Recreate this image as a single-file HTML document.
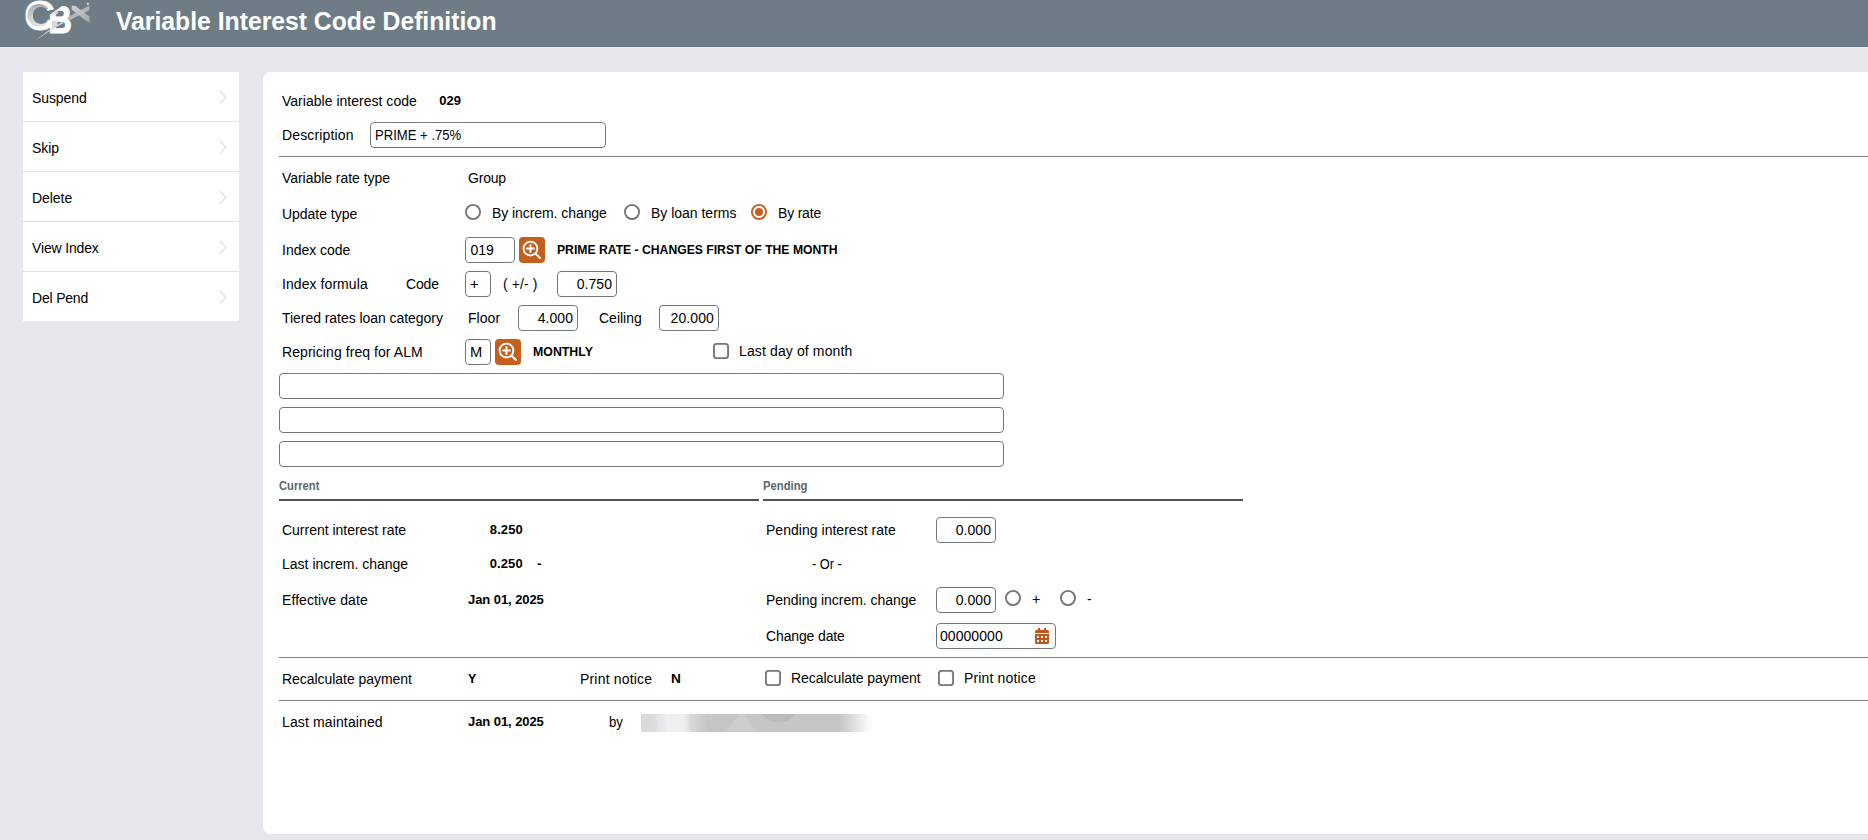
<!DOCTYPE html>
<html lang="en">
<head>
<meta charset="utf-8">
<title>Variable Interest Code Definition</title>
<style>
*{box-sizing:border-box;margin:0;padding:0}
html,body{width:1868px;height:840px;overflow:hidden}
body{background:#e7e6ed;font-family:"Liberation Sans",sans-serif;font-size:14px;color:#000;position:relative}
.abs,.t,.in,.hr,.rad,.chk,.btn{position:absolute}
.t{white-space:pre;transform-origin:0 0;line-height:normal}
#hdr{left:0;top:0;width:1868px;height:47px;background:#6e7d85;border-bottom:1px solid #65757d}
#hdr2{left:0;top:47px;width:1868px;height:1px;background:#edecf2}
#side{left:23px;top:72px;width:216px;height:249px;background:#fff}
.sep{position:absolute;left:0;width:216px;height:1px;background:#e4e3ec}
.chev{position:absolute;left:196px;width:8px;height:14px}
#panel{left:263px;top:72px;width:1620px;height:762px;background:#fff;border-radius:8px 0 0 8px}
.in{height:26px;border:1px solid #74777a;border-radius:4px;background:#fff}
.hr{height:1px;background:#7d7d7d;left:279px;width:1589px}
.ul{position:absolute;height:2px;background:#4c585e;top:499px}
.rad{width:16px;height:16px;border:2px solid #6b6b6b;border-radius:50%;background:#fff}
.rad.on{border-color:#c4601e}
.rad.on::after{content:"";position:absolute;left:2px;top:2px;width:8px;height:8px;border-radius:50%;background:#c4601e}
.chk{width:16px;height:16px;border:2px solid #737373;border-radius:3px;background:#fff}
.btn{width:26px;height:26px;border-radius:4px;background:#c4601e}
.btn svg{position:absolute;left:0;top:0}
</style>
</head>
<body>
<div id="hdr" class="abs"></div><div id="hdr2" class="abs"></div>
<!--LOGO_START--><svg class="abs" style="left:20px;top:0" width="75" height="46" viewBox="20 0 75 46">
  <defs>
    <linearGradient id="cg" x1="0" y1="3" x2="0" y2="28" gradientUnits="userSpaceOnUse"><stop offset="0" stop-color="#a7a9aa"/><stop offset="0.5" stop-color="#c9caca"/><stop offset="1" stop-color="#e6e6e6"/></linearGradient>
    <linearGradient id="xg" x1="72" y1="6" x2="90" y2="22" gradientUnits="userSpaceOnUse"><stop offset="0" stop-color="#d0d1d1"/><stop offset="1" stop-color="#a4a8aa"/></linearGradient>
    <linearGradient id="sg" x1="35" y1="40" x2="89" y2="6" gradientUnits="userSpaceOnUse"><stop offset="0" stop-color="#c9cdcf"/><stop offset="0.45" stop-color="#e4e4e4"/><stop offset="0.6" stop-color="#c2c4c5"/><stop offset="1" stop-color="#a3a7a9"/></linearGradient>
    <linearGradient id="bg2" x1="51" y1="14" x2="60" y2="9" gradientUnits="userSpaceOnUse"><stop offset="0" stop-color="#f4f4f4"/><stop offset="1" stop-color="#b9bbbc"/></linearGradient>
    <clipPath id="bclip"><path d="M46 40 V17.2 L66.5 3 H76 V40 Z"/></clipPath>
    <clipPath id="gclip"><path d="M20 -2 H45 L49 4 V9 H44 V21 H48 V32 H20 Z"/></clipPath>
  </defs>
  <text x="24.3" y="30.1" font-family="'Liberation Sans',sans-serif" font-weight="700" font-size="42.5" fill="#fff" stroke="#fff" stroke-width="0.8" transform="translate(24.3 0) scale(0.99 1) translate(-24.3 0)">C</text>
  <path d="M38.8 3.8 a11.5 11.5 0 1 0 0.01 0 Z M41.1 6.9 a8.5 8.5 0 1 1 -0.01 0 Z" fill="url(#cg)" fill-rule="evenodd" clip-path="url(#gclip)"/>
  <path d="M64.5 18.8 L89.3 5.6 L89.3 10.2 L69 20.6 Z" fill="#b4b7b9"/>
  <path d="M71.6 5.6 L75.6 5.9 L89.6 16.8 L89.6 22.4 L86.5 21 L71.6 9.6 Z" fill="url(#xg)"/>
  <circle cx="87.8" cy="3.9" r="1.1" fill="#d9dbdc"/>
  <g clip-path="url(#bclip)"><text x="48.2" y="33.4" font-family="'Liberation Sans',sans-serif" font-weight="700" font-size="39" fill="#fff" transform="translate(48.2 0) scale(0.84 1) translate(-48.2 0)" stroke="#fff" stroke-width="1.2">B</text></g>
  <path d="M50.5 18.3 L58.2 13 L58.2 9.6 L50.5 14.8 Z" fill="url(#bg2)"/>
  <path d="M52 20.5 H58 L57 25.6 L52 28.5 Z" fill="#dcdcdc"/>
  <path d="M35.2 40.7 L50 29.2 L62.5 21.6 L63.5 22.9 L50.8 30.2 Z" fill="#d5d8da"/>
</svg>
<!--LOGO_END-->
<div id="side" class="abs">
  <div class="sep" style="top:49px"></div><div class="sep" style="top:99px"></div><div class="sep" style="top:149px"></div><div class="sep" style="top:199px"></div>
</div>
<svg class="abs" style="left:219px;top:72px" width="10" height="250" viewBox="0 0 10 250" fill="none" stroke="#dcdce0" stroke-width="1.1">
  <path d="M1 19 L7 25.3 L1 31.6"/><path d="M1 69 L7 75.3 L1 81.6"/><path d="M1 119 L7 125.3 L1 131.6"/><path d="M1 169 L7 175.3 L1 181.6"/><path d="M1 219 L7 225.3 L1 231.6"/>
</svg>
<div id="panel" class="abs"></div>

<div class="in" style="left:370px;top:122px;width:236px"></div>
<div class="hr" style="top:156px"></div>

<svg class="abs" style="left:465px;top:204px" width="16" height="16" viewBox="0 0 16 16"><circle cx="8" cy="8" r="7.08" fill="#fff" stroke="#767676" stroke-width="1.85"/></svg>
<svg class="abs" style="left:624px;top:204px" width="16" height="16" viewBox="0 0 16 16"><circle cx="8" cy="8" r="7.08" fill="#fff" stroke="#767676" stroke-width="1.85"/></svg>
<svg class="abs" style="left:751px;top:204px" width="16" height="16" viewBox="0 0 16 16"><circle cx="8" cy="8" r="7.08" fill="#fff" stroke="#c4601e" stroke-width="1.85"/><circle cx="8" cy="8" r="4" fill="#c4601e"/></svg>

<div class="in" style="left:465px;top:237px;width:50px"></div>
<div class="btn" style="left:519px;top:237px"><svg width="26" height="26" viewBox="0 0 26 26" fill="none" stroke="#fff" stroke-width="2" stroke-linecap="round"><circle cx="11.45" cy="11.55" r="6.9" stroke-width="1.9"/><path d="M16.6 16.7 L21 21"/><path d="M7.2 11.55 H15.7 M11.45 7.3 V15.8" stroke-linecap="butt"/></svg></div>

<div class="in" style="left:465px;top:271px;width:26px"></div>
<div class="in" style="left:557px;top:271px;width:60px"></div>

<div class="in" style="left:518px;top:305px;width:60px"></div>
<div class="in" style="left:659px;top:305px;width:60px"></div>

<div class="in" style="left:465px;top:339px;width:26px"></div>
<div class="btn" style="left:495px;top:339px"><svg width="26" height="26" viewBox="0 0 26 26" fill="none" stroke="#fff" stroke-width="2" stroke-linecap="round"><circle cx="11.45" cy="11.55" r="6.9" stroke-width="1.9"/><path d="M16.6 16.7 L21 21"/><path d="M7.2 11.55 H15.7 M11.45 7.3 V15.8" stroke-linecap="butt"/></svg></div>
<svg class="abs" style="left:713px;top:343px" width="16" height="16" viewBox="0 0 16 16"><rect x="0.92" y="0.92" width="14.16" height="14.16" rx="2.6" fill="#fff" stroke="#767676" stroke-width="1.85"/></svg>

<div class="in" style="left:279px;top:373px;width:725px"></div>
<div class="in" style="left:279px;top:407px;width:725px"></div>
<div class="in" style="left:279px;top:441px;width:725px"></div>

<div class="ul" style="left:279px;width:480px"></div>
<div class="ul" style="left:763px;width:480px"></div>

<div class="in" style="left:936px;top:517px;width:60px"></div>
<div class="in" style="left:936px;top:587px;width:60px"></div>
<svg class="abs" style="left:1005px;top:590px" width="16" height="16" viewBox="0 0 16 16"><circle cx="8" cy="8" r="7.08" fill="#fff" stroke="#767676" stroke-width="1.85"/></svg>
<svg class="abs" style="left:1060px;top:590px" width="16" height="16" viewBox="0 0 16 16"><circle cx="8" cy="8" r="7.08" fill="#fff" stroke="#767676" stroke-width="1.85"/></svg>
<div class="in" style="left:936px;top:623px;width:120px"></div>
<svg class="abs" style="left:1035px;top:628px" width="14" height="16" viewBox="0 0 14 16" fill="#c0581a"><rect x="3" y="0" width="2" height="3"/><rect x="9.1" y="0" width="2" height="3"/><path d="M0 3.5 Q0 2 1.5 2 H12.5 Q14 2 14 3.5 V5 H0 Z"/><path d="M0 6.1 H14 V14.5 Q14 16 12.5 16 H1.5 Q0 16 0 14.5 Z M2.1 8 V10 H4 V8 Z M6 8 V10 H8 V8 Z M10 8 V10 H12 V8 Z M2.1 12 V14 H4 V12 Z M6 12 V14 H8 V12 Z M10 12 V14 H12 V12 Z" fill-rule="evenodd"/></svg>

<div class="hr" style="top:657px"></div>
<svg class="abs" style="left:765px;top:670px" width="16" height="16" viewBox="0 0 16 16"><rect x="0.92" y="0.92" width="14.16" height="14.16" rx="2.6" fill="#fff" stroke="#767676" stroke-width="1.85"/></svg>
<svg class="abs" style="left:938px;top:670px" width="16" height="16" viewBox="0 0 16 16"><rect x="0.92" y="0.92" width="14.16" height="14.16" rx="2.6" fill="#fff" stroke="#767676" stroke-width="1.85"/></svg>
<div class="hr" style="top:700px"></div>
<svg class="abs" style="left:641px;top:714px" width="231" height="18" viewBox="0 0 231 18">
<defs><linearGradient id="rg" x1="0" y1="0" x2="231" y2="0" gradientUnits="userSpaceOnUse">
<stop offset="0" stop-color="#dadada"/><stop offset="0.06" stop-color="#dcdcdc"/><stop offset="0.075" stop-color="#e6e5eb"/><stop offset="0.095" stop-color="#e8e7ec"/><stop offset="0.11" stop-color="#efefef"/><stop offset="0.185" stop-color="#efefef"/><stop offset="0.2" stop-color="#e7e6ec"/><stop offset="0.215" stop-color="#dadada"/><stop offset="0.25" stop-color="#d0d0d0"/><stop offset="0.29" stop-color="#c6c6c6"/><stop offset="0.86" stop-color="#c6c6c6"/><stop offset="0.885" stop-color="#d0d0d0"/><stop offset="0.915" stop-color="#dcdcdc"/><stop offset="0.935" stop-color="#e6e5eb"/><stop offset="0.96" stop-color="#f0f0f0"/><stop offset="0.98" stop-color="#f8f8f4"/><stop offset="1" stop-color="#fcfcf8"/></linearGradient></defs>
<rect width="231" height="18" fill="url(#rg)"/>
<path d="M84 18 L98 0 L102 0 L116 18 Z" fill="#cccccc"/>
<path d="M121 0 H154 Q148 8.5 137.5 8.5 Q127 8.5 121 0 Z" fill="#babcbb"/>
</svg>

<span class="t" style="left:116.00px;top:6px;font-size:26.4px;transform:scaleX(0.9367);font-weight:700;color:#fff;">Variable Interest Code Definition</span>
<span class="t" style="left:32.00px;top:90px;font-size:14px;letter-spacing:-0.091px;">Suspend</span>
<span class="t" style="left:32.00px;top:140px;font-size:14px;letter-spacing:-0.104px;">Skip</span>
<span class="t" style="left:32.00px;top:190px;font-size:14px;letter-spacing:-0.060px;">Delete</span>
<span class="t" style="left:32.00px;top:240px;font-size:14px;letter-spacing:-0.158px;">View Index</span>
<span class="t" style="left:32.00px;top:290px;font-size:14px;letter-spacing:-0.192px;">Del Pend</span>
<span class="t" style="left:282.00px;top:93px;font-size:14px;letter-spacing:0.019px;">Variable interest code</span>
<span class="t" style="left:439.20px;top:93px;font-size:13px;letter-spacing:0.080px;font-weight:700;">029</span>
<span class="t" style="left:282.00px;top:127px;font-size:14px;letter-spacing:0.153px;">Description</span>
<span class="t" style="left:375.00px;top:127px;font-size:14px;transform:scaleX(0.9353);">PRIME + .75%</span>
<span class="t" style="left:282.00px;top:170px;font-size:14px;letter-spacing:-0.042px;">Variable rate type</span>
<span class="t" style="left:468.00px;top:170px;font-size:14px;letter-spacing:-0.207px;">Group</span>
<span class="t" style="left:282.00px;top:206px;font-size:14px;letter-spacing:-0.030px;">Update type</span>
<span class="t" style="left:492.00px;top:205px;font-size:14px;letter-spacing:-0.068px;">By increm. change</span>
<span class="t" style="left:651.00px;top:205px;font-size:14px;letter-spacing:-0.012px;">By loan terms</span>
<span class="t" style="left:778.00px;top:205px;font-size:14px;letter-spacing:-0.198px;">By rate</span>
<span class="t" style="left:282.00px;top:242px;font-size:14px;letter-spacing:-0.010px;">Index code</span>
<span class="t" style="left:470.40px;top:242px;font-size:14px;letter-spacing:0.080px;">019</span>
<span class="t" style="left:557.00px;top:242px;font-size:13px;transform:scaleX(0.9367);font-weight:700;">PRIME RATE - CHANGES FIRST OF THE MONTH</span>
<span class="t" style="left:282.00px;top:276px;font-size:14px;letter-spacing:0.072px;">Index formula</span>
<span class="t" style="left:406.00px;top:276px;font-size:14px;letter-spacing:-0.145px;">Code</span>
<span class="t" style="left:470.00px;top:276px;font-size:14px;transform:scaleX(1.0500);">+</span>
<span class="t" style="left:503.00px;top:276px;font-size:14px;letter-spacing:0.099px;">( +/- )</span>
<span class="t" style="left:576.67px;top:276px;font-size:14px;letter-spacing:0.080px;">0.750</span>
<span class="t" style="left:282.00px;top:310px;font-size:14px;letter-spacing:-0.047px;">Tiered rates loan category</span>
<span class="t" style="left:468.00px;top:310px;font-size:14px;letter-spacing:0.044px;">Floor</span>
<span class="t" style="left:537.68px;top:310px;font-size:14px;letter-spacing:0.080px;">4.000</span>
<span class="t" style="left:599.00px;top:310px;font-size:14px;letter-spacing:0.000px;">Ceiling</span>
<span class="t" style="left:670.61px;top:310px;font-size:14px;letter-spacing:0.080px;">20.000</span>
<span class="t" style="left:282.00px;top:344px;font-size:14px;letter-spacing:0.067px;">Repricing freq for ALM</span>
<span class="t" style="left:470.00px;top:344px;font-size:14px;transform:scaleX(1.0500);">M</span>
<span class="t" style="left:533.00px;top:344px;font-size:13px;transform:scaleX(0.9500);font-weight:700;">MONTHLY</span>
<span class="t" style="left:739.00px;top:343px;font-size:14px;letter-spacing:0.123px;">Last day of month</span>
<span class="t" style="left:279.00px;top:479px;font-size:12px;transform:scaleX(0.9320);font-weight:700;color:#5c676c;">Current</span>
<span class="t" style="left:763.00px;top:479px;font-size:12px;transform:scaleX(0.9379);font-weight:700;color:#5c676c;">Pending</span>
<span class="t" style="left:282.00px;top:522px;font-size:14px;letter-spacing:-0.018px;">Current interest rate</span>
<span class="t" style="left:489.83px;top:522px;font-size:13px;letter-spacing:0.080px;font-weight:700;">8.250</span>
<span class="t" style="left:766.00px;top:522px;font-size:14px;letter-spacing:0.028px;">Pending interest rate</span>
<span class="t" style="left:955.67px;top:522px;font-size:14px;letter-spacing:0.080px;">0.000</span>
<span class="t" style="left:282.00px;top:556px;font-size:14px;letter-spacing:0.005px;">Last increm. change</span>
<span class="t" style="left:489.78px;top:556px;font-size:13px;letter-spacing:0.080px;font-weight:700;">0.250</span>
<span class="t" style="left:537.00px;top:556px;font-size:13px;transform:scaleX(1.0500);font-weight:700;">-</span>
<span class="t" style="left:812.00px;top:556px;font-size:14px;transform:scaleX(0.9137);">- Or -</span>
<span class="t" style="left:282.00px;top:592px;font-size:14px;letter-spacing:0.084px;">Effective date</span>
<span class="t" style="left:468.00px;top:592px;font-size:13px;letter-spacing:-0.070px;font-weight:700;">Jan 01, 2025</span>
<span class="t" style="left:766.00px;top:592px;font-size:14px;letter-spacing:-0.030px;">Pending increm. change</span>
<span class="t" style="left:955.67px;top:592px;font-size:14px;letter-spacing:0.080px;">0.000</span>
<span class="t" style="left:1032.00px;top:591px;font-size:14px;transform:scaleX(1.0127);">+</span>
<span class="t" style="left:1087.00px;top:591px;font-size:14px;transform:scaleX(0.9919);">-</span>
<span class="t" style="left:766.00px;top:628px;font-size:14px;letter-spacing:-0.135px;">Change date</span>
<span class="t" style="left:939.92px;top:628px;font-size:14px;letter-spacing:0.080px;">00000000</span>
<span class="t" style="left:282.00px;top:671px;font-size:14px;letter-spacing:-0.044px;">Recalculate payment</span>
<span class="t" style="left:468.00px;top:671px;font-size:13px;transform:scaleX(0.9587);font-weight:700;">Y</span>
<span class="t" style="left:580.00px;top:671px;font-size:14px;letter-spacing:0.184px;">Print notice</span>
<span class="t" style="left:671.00px;top:671px;font-size:13px;transform:scaleX(1.0500);font-weight:700;">N</span>
<span class="t" style="left:791.00px;top:670px;font-size:14px;letter-spacing:-0.061px;">Recalculate payment</span>
<span class="t" style="left:964.00px;top:670px;font-size:14px;letter-spacing:0.148px;">Print notice</span>
<span class="t" style="left:282.00px;top:714px;font-size:14px;letter-spacing:0.129px;">Last maintained</span>
<span class="t" style="left:468.00px;top:714px;font-size:13px;letter-spacing:-0.070px;font-weight:700;">Jan 01, 2025</span>
<span class="t" style="left:609.00px;top:714px;font-size:14px;transform:scaleX(0.9447);">by</span>
</body>
</html>
